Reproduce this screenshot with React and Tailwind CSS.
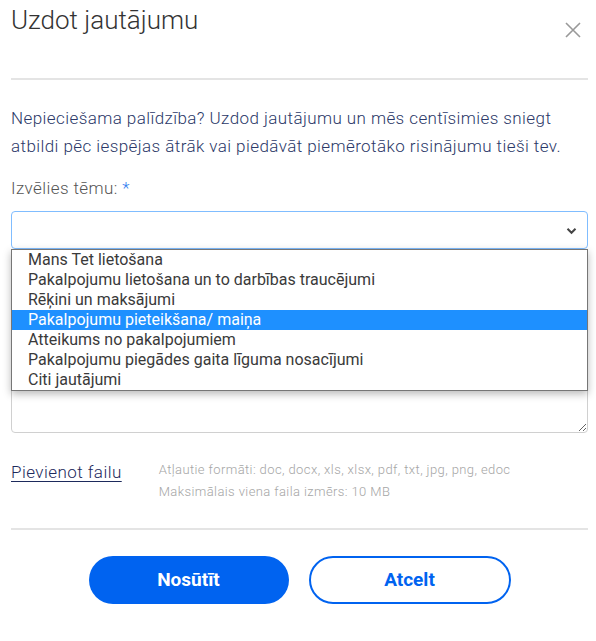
import React from 'react';

const TOPICS = [
    'Mans Tet lietošana',
    'Pakalpojumu lietošana un to darbības traucējumi',
    'Rēķini un maksājumi',
    'Pakalpojumu pieteikšana/ maiņa',
    'Atteikums no pakalpojumiem',
    'Pakalpojumu piegādes gaita līguma nosacījumi',
    'Citi jautājumi',
];

function TopicSelect({ selected }) {
    return (
        <div className="relative mt-[11px]">
            <div className="h-[38px] rounded-[4px] border border-[#80bdff] bg-white flex items-center justify-end pr-[10px]">
                <svg width="11" height="8" viewBox="0 0 11 8" className="mt-[1px]">
                    <path d="M1.5 1.8 L5.5 5.8 L9.5 1.8" fill="none" stroke="#444" strokeWidth="2" />
                </svg>
            </div>
            <ul className="absolute left-0 right-0 top-full z-10 border border-[#767676] bg-white shadow-[0_3px_8px_rgba(0,0,0,0.28)]">
                {TOPICS.map(topic => (
                    <li key={topic}
                        className={`h-[20px] leading-[20px] pl-[16px] text-[16px] ${
                            topic === selected ? 'bg-[#1e90ff] text-white' : 'text-[#3a3a3a]'
                        }`}>
                        {topic}
                    </li>
                ))}
            </ul>
        </div>
    );
}

export default function App() {
    return (
        <div className="w-[596px] h-[641px] bg-white pl-[11px] pr-[8px] font-['Roboto',sans-serif]">
            <div className="h-[78px] flex items-start justify-between">
                <h2 className="mt-[4px] text-[26px] leading-[32px] font-light text-[#333]">Uzdot jautājumu</h2>
                <button className="mt-[22px] mr-[7px] text-[#999]">
                    <svg width="16" height="16" viewBox="0 0 16 16">
                        <path d="M1 1 L15 15 M15 1 L1 15" stroke="currentColor" strokeWidth="1.6" />
                    </svg>
                </button>
            </div>
            <div className="h-[2px] bg-[#e4e4e4]" />

            <p className="mt-[24px] text-[17px] leading-[28px] tracking-[0.42px] font-light text-[#2b3868]">
                Nepieciešama palīdzība? Uzdod jautājumu un mēs centīsimies sniegt atbildi pēc iespējas ātrāk vai piedāvāt piemērotāko risinājumu tieši tev.
            </p>

            <label className="block mt-[16px] text-[17px] leading-[24px] tracking-[0.4px] font-light text-[#555]">
                Izvēlies tēmu: <span className="text-[#2f7df0]">*</span>
            </label>

            <TopicSelect selected="Pakalpojumu pieteikšana/ maiņa" />

            <textarea readOnly
                      className="block mt-[9px] w-full h-[175px] rounded-[4px] border border-[#d0d0d0] bg-white" />

            <div className="mt-[27px] flex items-start">
                <a href="#" className="text-[17px] leading-[24px] tracking-[0.45px] font-light text-[#1d2a5c] underline underline-offset-[3px]">
                    Pievienot failu
                </a>
                <div className="ml-[37px] -mt-[1px] text-[13px] leading-[22px] tracking-[0.4px] font-light text-[#a5a5a5]">
                    <div>Atļautie formāti: doc, docx, xls, xlsx, pdf, txt, jpg, png, edoc</div>
                    <div>Maksimālais viena faila izmērs: 10 MB</div>
                </div>
            </div>

            <div className="mt-[25px] h-[2px] bg-[#e4e4e4]" />

            <div className="mt-[26px] flex justify-center gap-[20px]">
                <button className="w-[200px] h-[48px] rounded-full bg-[#0063f0] text-white text-[19px] font-bold">
                    Nosūtīt
                </button>
                <button className="w-[202px] h-[48px] rounded-full border-2 border-[#0063f0] text-[#0063f0] text-[19px] font-bold">
                    Atcelt
                </button>
            </div>
        </div>
    );
}
